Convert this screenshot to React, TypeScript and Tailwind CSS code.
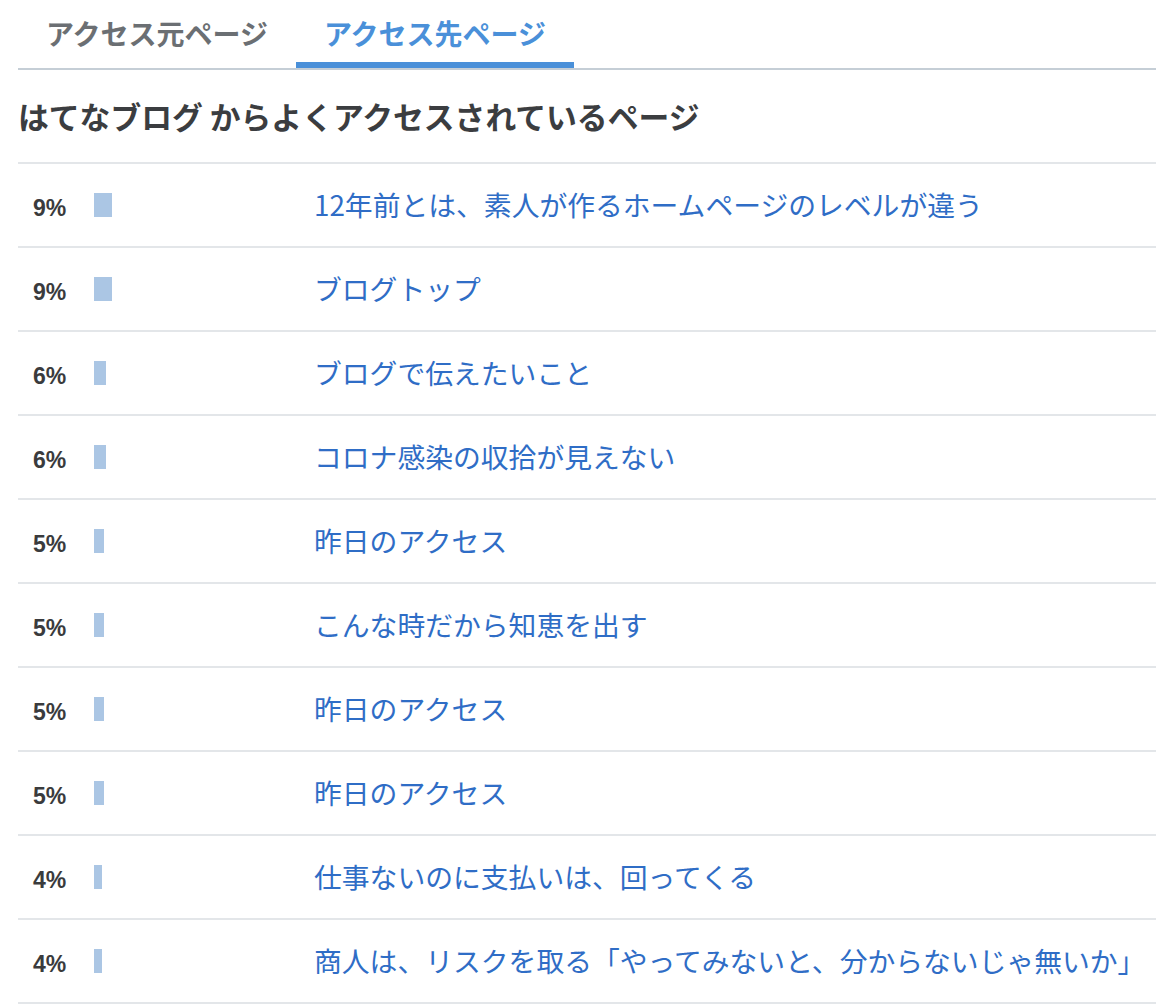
import React from "react";

const rows: { p: number; t: string }[] = [
  { p: 9, t: "12年前とは、素人が作るホームページのレベルが違う" },
  { p: 9, t: "ブログトップ" },
  { p: 6, t: "ブログで伝えたいこと" },
  { p: 6, t: "コロナ感染の収拾が見えない" },
  { p: 5, t: "昨日のアクセス" },
  { p: 5, t: "こんな時だから知恵を出す" },
  { p: 5, t: "昨日のアクセス" },
  { p: 5, t: "昨日のアクセス" },
  { p: 4, t: "仕事ないのに支払いは、回ってくる" },
  { p: 4, t: "商人は、リスクを取る「やってみないと、分からないじゃ無いか」" },
];

const jp = { fontFamily: '"Noto Sans CJK JP", "Noto Sans", sans-serif' };

export default function App() {
  return (
    <div className="bg-white w-[1156px] h-[1006px] overflow-hidden pl-[18px]" style={jp}>
      <div className="flex border-b-2 border-[#c5ced6]">
        <div className="w-[278px] h-[68px] flex items-center justify-center pb-[2px] text-[28px] font-bold text-[#6b6f73]">
          アクセス元ページ
        </div>
        <div className="w-[278px] h-[68px] flex items-center justify-center pt-[4px] text-[28px] font-bold text-[#4a90d9] border-b-[6px] border-[#4a90d9]">
          アクセス先ページ
        </div>
      </div>
      <h2 className="h-[92px] flex items-center pt-[0px] text-[30.8px] font-bold text-[#3b3d40]">
        はてなブログ からよくアクセスされているページ
      </h2>
      <div className="border-b-2 border-[#e3e6e9]">
        {rows.map((r, i) => (
          <div key={i} className="flex items-center h-[84px] border-t-2 border-[#e3e6e9]">
            <div
              className="w-[76px] pl-[15px] pt-[6px] text-[23px] font-bold text-[#3a3b3d]"
              style={{ fontFamily: '"Liberation Sans", Arial, sans-serif' }}
            >
              {r.p}%
            </div>
            <div className="w-[220px] flex">
              <div className="h-[24px] bg-[#abc6e4]" style={{ width: r.p * 2 }} />
            </div>
            <a className="text-[27.8px] text-[#2f6dc6] whitespace-nowrap" href="#">
              {r.t}
            </a>
          </div>
        ))}
      </div>
    </div>
  );
}
